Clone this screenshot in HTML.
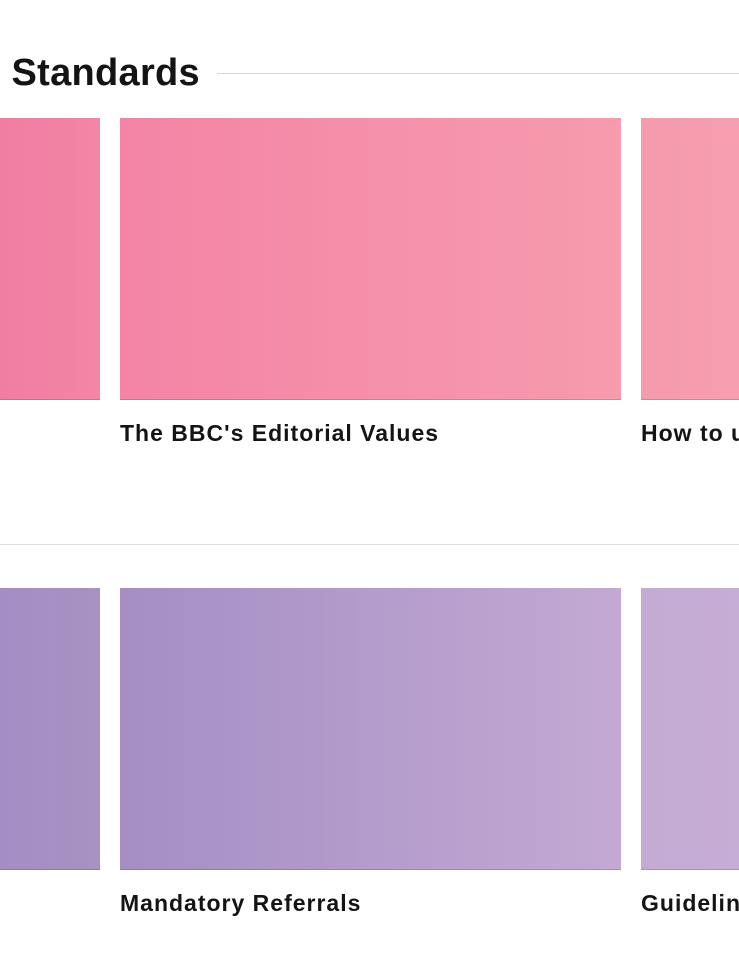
<!DOCTYPE html>
<html><head><meta charset="utf-8"><style>
html,body{margin:0;padding:0;width:739px;height:959px;overflow:hidden;background:#fff;font-family:"Liberation Sans",sans-serif}
#w{position:relative;width:739px;height:959px;overflow:hidden}
.h{position:absolute;right:539px;top:51px;font-size:38px;font-weight:bold;color:#141414;white-space:nowrap;line-height:44px;letter-spacing:0.3px}
.line{position:absolute;left:217px;right:0;top:73px;height:1px;background:#d6d6d6}
.div{position:absolute;left:0;right:0;top:544px;height:1px;background:#e0e0e0}
.c{position:absolute;height:281px;border-bottom:1px solid rgba(0,0,0,.15)}
.t{position:absolute;font-size:23px;font-weight:bold;color:#141414;white-space:nowrap;letter-spacing:1px}
</style></head><body><div id="w">
<div class="h">Editorial Standards</div>
<div class="line"></div>
<div class="c" style="left:0;width:100px;top:118px;background:linear-gradient(90deg,#f07ea2,#f385a6)"></div>
<div class="c" style="left:120px;width:501px;top:118px;background:linear-gradient(90deg,#f384a5,#f79bae)"></div>
<div class="c" style="left:641px;width:98px;top:118px;background:linear-gradient(90deg,#f69aae,#f79eb0)"></div>
<div class="t" style="left:120px;top:420px">The BBC's Editorial Values</div>
<div class="t" style="left:641px;top:420px">How to use the Guidelines</div>
<div class="div"></div>
<div class="c" style="left:0;width:100px;top:588px;background:linear-gradient(90deg,#a38dc4,#a892c3)"></div>
<div class="c" style="left:120px;width:501px;top:588px;background:linear-gradient(90deg,#a48ec4,#c3a9d3)"></div>
<div class="c" style="left:641px;width:98px;top:588px;background:linear-gradient(90deg,#c4abd4,#c6add5)"></div>
<div class="t" style="left:120px;top:890px">Mandatory Referrals</div>
<div class="t" style="left:641px;top:890px">Guidelines</div>
</div></body></html>
